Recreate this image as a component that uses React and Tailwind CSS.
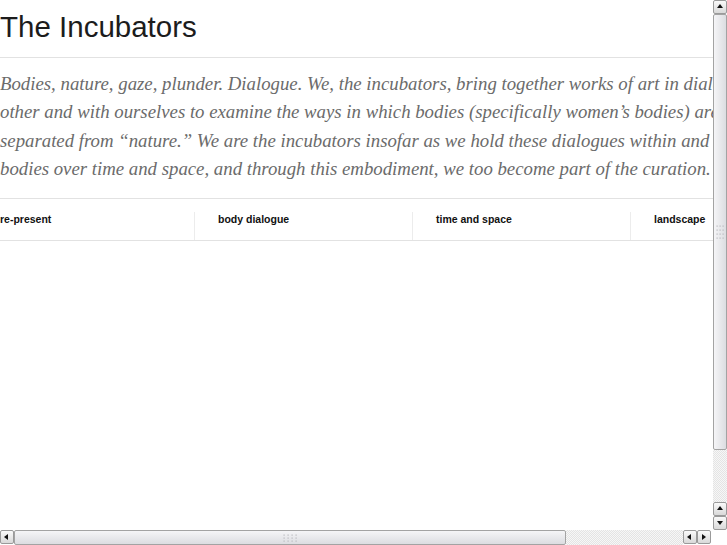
const tabs = ["re-present", "body dialogue", "time and space", "landscape", "the archive"];

const lines = [
  "Bodies, nature, gaze, plunder. Dialogue. We, the incubators, bring together works of art in dialogue with each",
  "other and with ourselves to examine the ways in which bodies (specifically women\u2019s bodies) are constructed as",
  "separated from \u201cnature.\u201d We are the incubators insofar as we hold these dialogues within and through our",
  "bodies over time and space, and through this embodiment, we too become part of the curation.",
];

const Arrow = ({ dir }) => {
  const pts = {
    up: "2,6 5,2 8,6",
    down: "2,3 8,3 5,7",
    left: "6,2 6,8 2,5",
    right: "3,2 3,8 7,5",
  };
  return (
    <div className="w-[14px] h-[14px] shrink-0 flex items-center justify-center rounded-[2px] border border-[#9a9a9a] bg-gradient-to-b from-[#fafafa] to-[#d9d9d9]">
      <svg width="10" height="10" viewBox="0 0 10 10">
        <polygon points={pts[dir]} fill="#111" />
      </svg>
    </div>
  );
};

const Grip = ({ vertical }) => (
  <svg width={vertical ? 10 : 16} height={vertical ? 16 : 10} viewBox={vertical ? "0 0 10 16" : "0 0 16 10"}>
    {Array.from({ length: 12 }).map((_, i) => {
      const a = i % 3;
      const b = Math.floor(i / 3);
      const x = vertical ? 1.5 + a * 3 : 1.5 + b * 4;
      const y = vertical ? 1.5 + b * 4 : 1.5 + a * 3;
      return <rect key={i} x={x} y={y} width="1.2" height="1.2" fill="#b8b8bc" />;
    })}
  </svg>
);

const track =
  "bg-[repeating-conic-gradient(#e4e4e4_0_25%,#f7f7f7_0_50%)] bg-[length:2px_2px]";

export default function App() {
  return (
    <div className="w-[727px] h-[545px] flex flex-col overflow-hidden bg-white">
      <div className="flex flex-1 min-h-0">
        <main className="flex-1 min-w-0 overflow-hidden">
          <h1
            className="pt-[11px] pb-[14px] text-[29.5px] leading-[32px] text-[#1c1c1c] border-b border-[#e2e2e2] whitespace-nowrap"
            style={{ fontFamily: '"Liberation Sans", Arial, sans-serif' }}
          >
            The Incubators
          </h1>
          <p
            className="pt-[12px] pb-[14px] text-[18.8px] leading-[28.4px] italic text-[#6b6b6b] border-b border-[#e2e2e2] whitespace-nowrap"
            style={{ fontFamily: '"Liberation Serif", "Times New Roman", serif' }}
          >
            {lines.map((l) => (
              <span key={l} className="block">
                {l}
              </span>
            ))}
          </p>
          <nav
            className="flex h-[42px] border-b border-[#e2e2e2] whitespace-nowrap"
            style={{ fontFamily: '"Liberation Sans", Arial, sans-serif' }}
          >
            {tabs.map((t, i) => (
              <div
                key={t}
                className={`mt-[13px] w-[218px] shrink-0 pl-[23px] pt-[1px] border-r border-[#ececec] text-[10.5px] leading-[12px] font-bold text-[#111] ${
                  i === 0 ? "-ml-[23px]" : ""
                }`}
              >
                {t}
              </div>
            ))}
          </nav>
        </main>
        <aside className="w-[14px] shrink-0 flex flex-col">
          <Arrow dir="up" />
          <div className="h-[436px] shrink-0 flex items-center justify-center rounded-[2px] border border-[#a3a3a3] bg-gradient-to-r from-[#f5f5f7] to-[#dcdde1]">
            <Grip vertical />
          </div>
          <div className={`flex-1 ${track}`} />
          <Arrow dir="up" />
          <Arrow dir="down" />
        </aside>
      </div>
      <div className="h-[15px] shrink-0 flex">
        <div className="w-[711px] flex">
          <Arrow dir="left" />
          <div className="w-[552px] shrink-0 flex items-center justify-center rounded-[2px] border border-[#a3a3a3] bg-gradient-to-b from-[#f5f5f7] to-[#dcdde1]">
            <Grip />
          </div>
          <div className={`flex-1 ${track}`} />
          <Arrow dir="left" />
          <Arrow dir="right" />
        </div>
        <div className="flex-1 bg-white" />
      </div>
    </div>
  );
}
